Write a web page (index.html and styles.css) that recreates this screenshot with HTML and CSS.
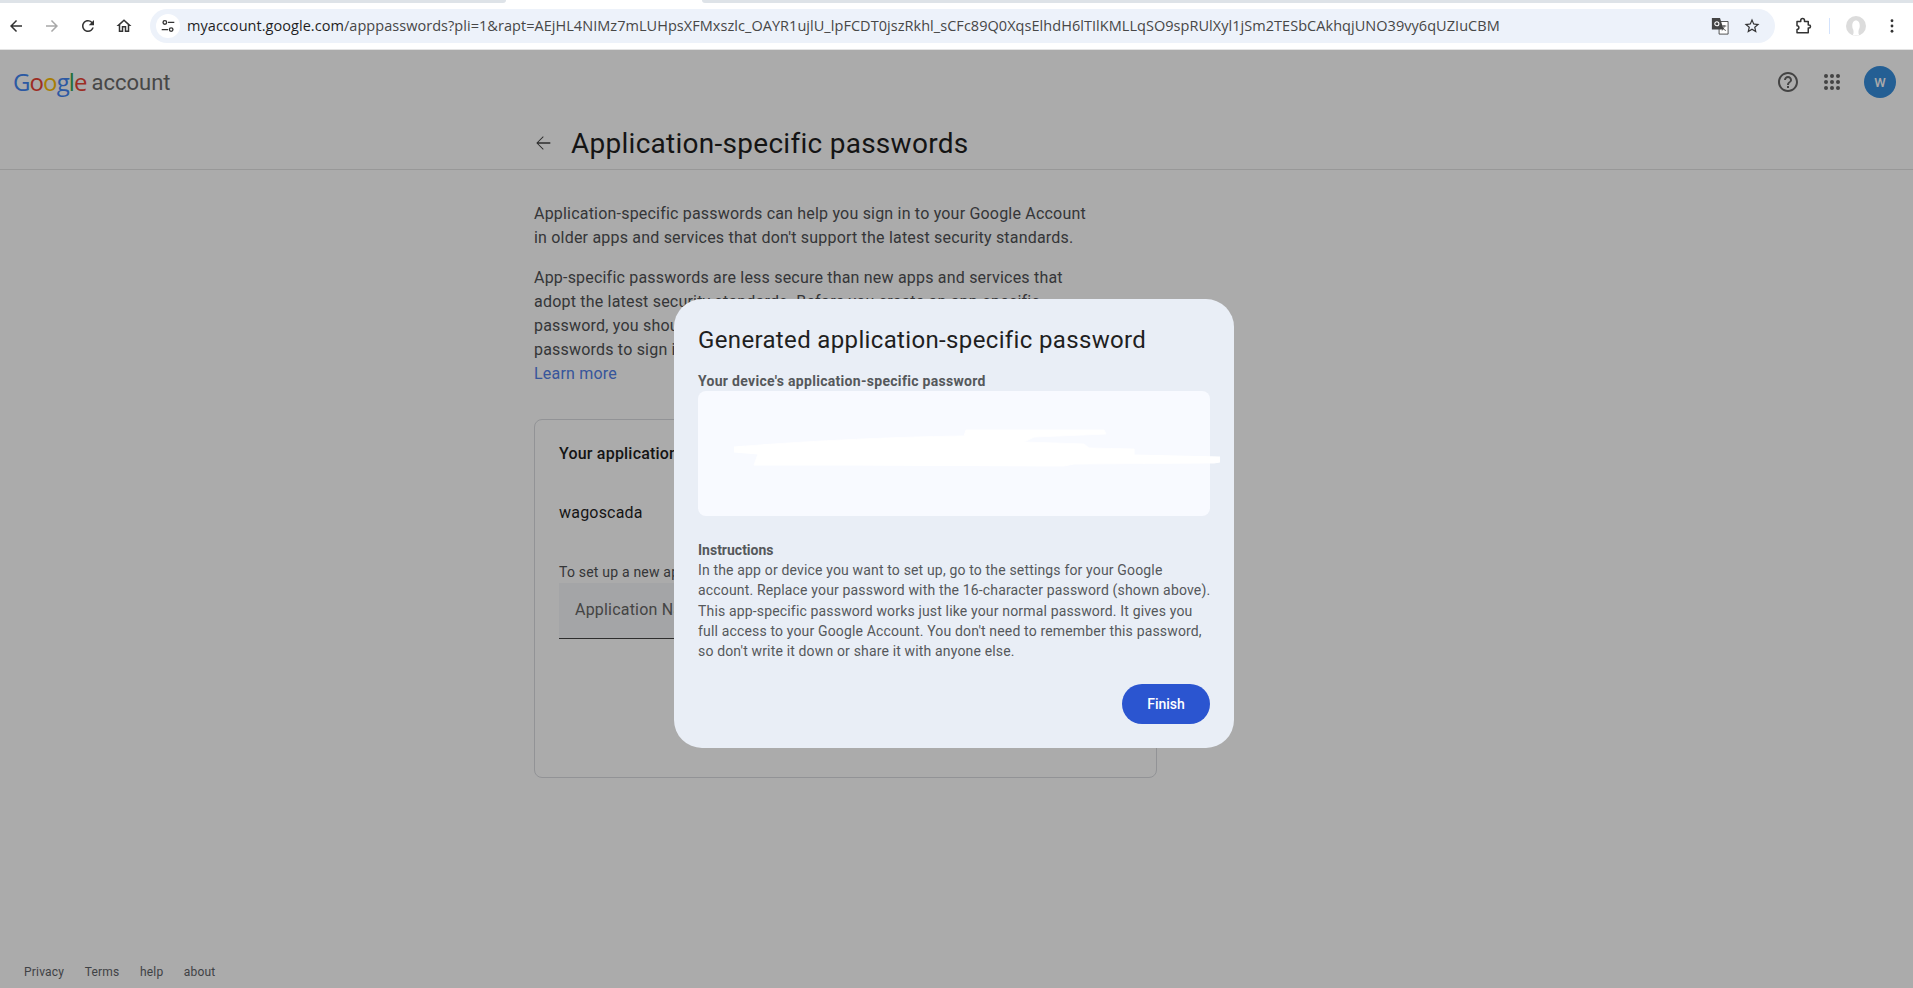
FILE: index.html
```html
<!DOCTYPE html>
<html>
<head>
    <meta charset="UTF-8">
    <title>Application-specific passwords</title>
    <link rel="stylesheet" href="styles.css">
</head>
<body>
<div class="tabstrip">
    <div class="strip-left"></div>
    <div class="strip-right"></div>
</div>
<div class="toolbar">
    <svg class="tool tool-first" viewBox="0 0 24 24"><path d="M20 11H7.830l5.590-5.590L12 4l-8 8 8 8 1.410-1.410L7.830 13H20v-2z"/></svg>
    <svg class="tool tool-off" viewBox="0 0 24 24"><path d="M4 11h12.170l-5.590-5.590L12 4l8 8-8 8-1.410-1.410L16.170 13H4v-2z"/></svg>
    <svg class="tool" viewBox="0 0 24 24"><path d="M17.650 6.350A7.958 7.958 0 0 0 12 4c-4.420 0-7.990 3.580-7.990 8s3.570 8 7.990 8c3.730 0 6.840-2.550 7.730-6h-2.080A5.990 5.990 0 0 1 12 18c-3.310 0-6-2.690-6-6s2.690-6 6-6c1.660 0 3.140.69 4.220 1.780L13 11h7V4l-2.350 2.350z"/></svg>
    <svg class="tool" viewBox="0 0 24 24"><path d="M12 5.690l5 4.500V18h-2v-6H9v6H7v-7.810l5-4.500M12 3L2 12h3v8h6v-6h2v6h6v-8h3L12 3z"/></svg>
    <div class="omnibox">
        <span class="site-icon">
            <svg viewBox="0 0 20 20" width="18" height="18" fill="none" stroke="#333" stroke-width="1.500"><circle cx="6.500" cy="6" r="2"/><path d="M10 6h7M3 14h7"/><circle cx="13.500" cy="14" r="2"/></svg>
        </span>
        <span class="url"><b>myaccount.google.com</b>/apppasswords?pli=1&amp;rapt=AEjHL4NIMz7mLUHpsXFMxszlc_OAYR1ujlU_lpFCDT0jszRkhl_sCFc89Q0XqsElhdH6lTIlKMLLqSO9spRUlXyl1jSm2TESbCAkhqjUNO39vy6qUZIuCBM</span>
        <svg class="translate" viewBox="0 0 20 20" width="18" height="18">
            <path d="M9 5h10v14H9z" fill="#fff" stroke="#444"/>
            <path d="M1 1h9l4 13H1z" fill="#444"/>
            <circle cx="6.500" cy="7.500" r="2.300" fill="none" stroke="#fff" stroke-width="1.200"/>
            <path d="M12 10h5M14.500 9v1c0 2.500-1 4-2.500 5M13 11.500c.5 1.500 2 3 3.500 3.500" fill="none" stroke="#444"/>
        </svg>
        <svg class="star" viewBox="0 0 24 24"><path d="M22 9.240l-7.190-.62L12 2 9.190 8.630 2 9.240l5.460 4.730L5.820 21 12 17.270 18.180 21l-1.630-7.030L22 9.240zM12 15.400l-3.760 2.270 1-4.280-3.320-2.880 4.380-.38L12 6.100l1.710 4.040 4.380.38-3.320 2.880 1 4.280L12 15.400z"/></svg>
    </div>
    <svg class="ext" viewBox="0 0 24 24" fill="none" stroke="#333" stroke-width="2" stroke-linejoin="round"><path d="M4 6H9V4.500a2.500 2.500 0 0 1 5 0V6h5v4.500h1a2 2 0 0 1 0 4h-1V21H4v-4.500a2.500 2.500 0 0 0 0-5Z"/></svg>
    <div class="tool-divider"></div>
    <svg class="profile" viewBox="0 0 22 22"><circle cx="11" cy="11" r="11" fill="#dcdcdc"/><path d="M7.500 21c1-1.500 1-4 .5-6C6 12 6.500 5 11 5s5 7 3 10c-.5 2-.5 4.500.5 6a11 11 0 0 1-7 0z" fill="#fff"/></svg>
    <svg class="dots" viewBox="0 0 4 16" fill="#333"><circle cx="2" cy="2" r="1.600"/><circle cx="2" cy="8" r="1.600"/><circle cx="2" cy="14" r="1.600"/></svg>
</div>

<div class="page">
    <header class="top">
        <div class="logo"><span class="g-blue">G</span><span class="g-red">o</span><span class="g-yellow">o</span><span class="g-blue">g</span><span class="g-green">l</span><span class="g-red">e</span></div>
        <div class="logo-word">account</div>
        <svg class="top-help" viewBox="0 0 24 24"><path d="M11 18h2v-2h-2v2zm1-16C6.480 2 2 6.480 2 12s4.480 10 10 10 10-4.480 10-10S17.520 2 12 2zm0 18c-4.410 0-8-3.590-8-8s3.590-8 8-8 8 3.590 8 8-3.590 8-8 8zm0-14c-2.210 0-4 1.790-4 4h2c0-1.100.9-2 2-2s2 .9 2 2c0 2-3 1.750-3 5h2c0-2.250 3-2.500 3-5 0-2.210-1.790-4-4-4z"/></svg>
        <div class="apps">
            <i></i><i></i><i></i><i></i><i></i><i></i><i></i><i></i><i></i>
        </div>
        <div class="avatar">W</div>
    </header>

    <div class="title-row">
        <div class="title-inner">
            <svg class="title-back" viewBox="0 0 24 24"><path d="M20 11.200H6.900l5.800-5.800L12 4.700l-7.300 7.300 7.300 7.300.7-.7-5.800-5.800H20v-1.600z"/></svg>
            <h1>Application-specific passwords</h1>
        </div>
    </div>

    <main class="content">
        <p>Application-specific passwords can help you sign in to your Google Account<br>in older apps and services that don't support the latest security standards.</p>
        <p>App-specific passwords are less secure than new apps and services that<br>adopt the latest security standards. Before you create an app-specific<br>password, you should check whether your app supports newer app<br>passwords to sign in.<br><a href="#">Learn more</a></p>

        <section class="card">
            <h2>Your application-specific passwords</h2>
            <div class="app-name">wagoscada</div>
            <div class="hint">To set up a new app-specific password, enter a name below</div>
            <div class="field">Application Name</div>
        </section>
    </main>

    <footer class="foot">
        <a href="#">Privacy</a>
        <a href="#">Terms</a>
        <a href="#">help</a>
        <a href="#">about</a>
    </footer>
</div>

<div class="scrim">
    <div class="dialog">
        <h3>Generated application-specific password</h3>
        <div class="pw-label">Your device's application-specific password</div>
        <div class="pw-box">
            <svg class="scribble" viewBox="0 0 486 42" width="486" height="42">
                <path d="M0 18C60 13 150 8 230 7L232 1 370 1 372 5 300 8 290 13 350 15 355 19 400 20 400 26 486 28 486 33 480 34 340 35 330 37 100 36 20 36 24 25 0 23Z" fill="#fff" stroke="#fff" stroke-linejoin="round"/>
            </svg>
        </div>
        <div class="inst-title">Instructions</div>
        <div class="inst">In the app or device you want to set up, go to the settings for your Google<br>account. Replace your password with the 16-character password (shown above).<br>This app-specific password works just like your normal password. It gives you<br>full access to your Google Account. You don't need to remember this password,<br>so don't write it down or share it with anyone else.</div>
        <div class="actions">
            <button type="button" class="finish">Finish</button>
        </div>
    </div>
</div>
</body>
</html>
```

FILE: styles.css
```css
* {
    padding: 0;
    margin: 0;
    box-sizing: border-box;
}

html, body {
    height: 988px;
    overflow: hidden;
}

body {
    font-family: Roboto, "Liberation Sans", sans-serif;
    background: #fff;
    color: #1f1f1f;
    position: relative;
}

/* browser chrome */
.tabstrip {
    display: flex;
    height: 3px;
    justify-content: space-between;
}

.strip-left {
    width: 506px;
    background: #dee3e8;
    border-bottom-right-radius: 6px;
}

.strip-right {
    width: 1211px;
    background: #dee3e8;
    border-bottom-left-radius: 6px;
}

.toolbar {
    display: flex;
    align-items: center;
    height: 47px;
    background: #fff;
    border-bottom: 1px solid #e3e3e3;
    padding-bottom: 1px;
}

.tool {
    width: 18px;
    height: 18px;
    fill: #333;
    margin-left: 18px;
    flex: none;
}

.tool-first {
    margin-left: 7px;
}

.tool-off {
    fill: #a8a8a8;
}

.omnibox {
    display: flex;
    align-items: center;
    width: 1625px;
    height: 34px;
    margin-left: 17px;
    background: #edf2fa;
    border-radius: 17px;
    padding-left: 6px;
    flex: none;
}

.site-icon {
    width: 24px;
    height: 24px;
    background: #fff;
    border-radius: 50%;
    display: flex;
    align-items: center;
    justify-content: center;
    flex: none;
}

.url {
    font-family: "Open Sans", "Liberation Sans", sans-serif;
    font-size: 14.5px;
    letter-spacing: 0.045px;
    margin-left: 7px;
    width: 1524px;
    color: #474747;
    white-space: nowrap;
    flex: none;
}

.url b {
    font-weight: 400;
    color: #1f1f1f;
}

.translate {
    flex: none;
}

.star {
    width: 18px;
    height: 18px;
    fill: #333;
    margin-left: 14px;
    flex: none;
}

.ext {
    width: 18px;
    height: 18px;
    margin-left: 19px;
    flex: none;
}

.tool-divider {
    width: 1px;
    height: 16px;
    background: #d3e3fd;
    margin-left: 17px;
}

.profile {
    width: 20px;
    height: 20px;
    margin-left: 16px;
    flex: none;
}

.dots {
    width: 4px;
    height: 14px;
    margin-left: 24px;
    flex: none;
}

/* page under the dialog */
.page {
    height: 938px;
    display: flex;
    flex-direction: column;
}

.top {
    display: flex;
    align-items: center;
    height: 64px;
    padding: 0 17px 0 13px;
}

.logo {
    font-family: "Open Sans", sans-serif;
    font-size: 24px;
    letter-spacing: -0.9px;
    line-height: 28px;
}

.g-blue { color: #4285f4; }
.g-red { color: #ea4335; }
.g-yellow { color: #fbbc05; }
.g-green { color: #34a853; }

.logo-word {
    font-size: 22px;
    color: #6b6b6b;
    margin-left: 5px;
    margin-right: auto;
}

.top-help {
    width: 24px;
    height: 24px;
    fill: #666;
}

.apps {
    display: grid;
    grid-template-columns: repeat(3, 4px);
    gap: 2px;
    margin-left: 24px;
}

.apps i {
    width: 4px;
    height: 4px;
    border-radius: 50%;
    background: #666;
}

.avatar {
    width: 32px;
    height: 32px;
    border-radius: 50%;
    background: #378edd;
    color: #fff;
    font-size: 13px;
    font-weight: 500;
    display: flex;
    align-items: center;
    justify-content: center;
    margin-left: 24px;
}

.title-row {
    height: 56px;
    padding-top: 4px;
    border-bottom: 1px solid #e3e3e3;
}

.title-inner {
    display: flex;
    align-items: center;
    width: 845px;
    height: 51px;
    margin: 0 auto;
}

.title-back {
    width: 22px;
    height: 22px;
    fill: #444;
    margin: 0 17px 2px -2px;
    flex: none;
}

h1 {
    font-size: 28px;
    font-weight: 400;
    line-height: 36px;
    letter-spacing: 0.27px;
}

.content {
    width: 845px;
    margin: 0 auto;
    padding-top: 32px;
    font-size: 16px;
    line-height: 24px;
    letter-spacing: 0.2px;
    color: #4f5154;
}

.content p {
    margin-bottom: 16px;
}

.content a {
    color: #5280e8;
    text-decoration: none;
}

.card {
    width: 623px;
    height: 359px;
    margin-top: 33px;
    border: 1px solid #dadce0;
    border-radius: 8px;
    padding: 22px 24px;
}

.card h2 {
    font-size: 16px;
    font-weight: 500;
    line-height: 24px;
    color: #1f1f1f;
}

.app-name {
    margin-top: 35px;
    color: #1f1f1f;
}

.hint {
    margin-top: 37px;
    font-size: 14px;
    line-height: 21px;
}

.field {
    height: 56px;
    width: 574px;
    background: #f5f6f9;
    border-bottom: 1px solid #444;
    padding: 15px 16px;
    color: #666;
}

.foot {
    margin-top: auto;
    display: flex;
    padding: 0 0 8px 24px;
    font-size: 12px;
    line-height: 16px;
    letter-spacing: 0.2px;
}

.foot a {
    color: #5f6368;
    text-decoration: none;
    margin-right: 20.5px;
}

/* dialog */
.scrim {
    position: absolute;
    top: 50px;
    left: 0;
    right: 0;
    bottom: 0;
    background: rgba(0, 0, 0, 0.33);
    display: flex;
    align-items: flex-start;
    justify-content: center;
    padding: 249px 5px 0 0;
}

.dialog {
    width: 560px;
    height: 449px;
    background: #e9eef6;
    border-radius: 28px;
    padding: 25px 24px 24px;
}

.dialog h3 {
    font-size: 24px;
    font-weight: 400;
    line-height: 32px;
    letter-spacing: 0.35px;
    color: #1f1f1f;
}

.pw-label {
    margin-top: 15px;
    font-size: 14px;
    font-weight: 700;
    line-height: 20px;
    letter-spacing: 0.3px;
    color: #55585b;
}

.pw-box {
    position: relative;
    height: 125px;
    background: #f8faff;
    border-radius: 8px;
}

.scribble {
    position: absolute;
    left: 36px;
    top: 38px;
}

.inst-title {
    margin-top: 24px;
    font-size: 14px;
    font-weight: 700;
    line-height: 20px;
    color: #55585b;
}

.inst {
    font-size: 14px;
    line-height: 20.3px;
    letter-spacing: 0.16px;
    color: #55585b;
    white-space: nowrap;
}

.actions {
    display: flex;
    justify-content: flex-end;
    margin-top: 23px;
}

.finish {
    width: 88px;
    height: 40px;
    border: none;
    border-radius: 20px;
    background: #2b55d0;
    color: #fff;
    font-family: Roboto, sans-serif;
    font-size: 14px;
    font-weight: 500;
}
```
